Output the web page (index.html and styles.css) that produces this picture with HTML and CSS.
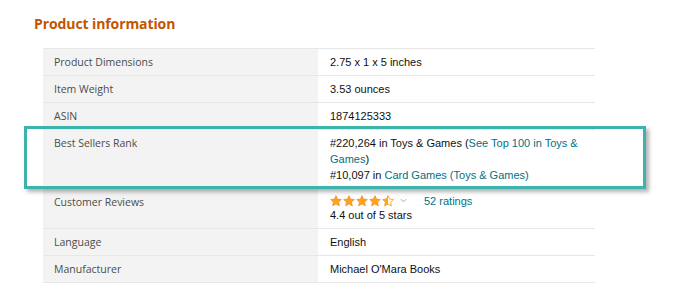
FILE: index.html
```html
<!DOCTYPE html>
<html>
<head>
<meta charset="utf-8">
<link rel="stylesheet" href="styles.css">
</head>
<body>
<div class="page">
  <h2 class="title">Product information</h2>
  <div class="table-wrap">
    <table class="info">
      <tr><th>Product Dimensions</th><td>2.75 x 1 x 5 inches</td></tr>
      <tr><th>Item Weight</th><td>3.53 ounces</td></tr>
      <tr><th>ASIN</th><td>1874125333</td></tr>
      <tr class="rank"><th>Best Sellers Rank</th><td>#220,264 in Toys &amp; Games (<a href="#">See Top 100 in Toys &amp; Games</a>)<br>#10,097 in <a href="#">Card Games (Toys &amp; Games)</a></td></tr>
      <tr class="reviews"><th>Customer Reviews</th><td>
        <div class="stars-line">
          <span class="stars">
            <svg viewBox="0 0 12 12" class="star"><path d="M6 0.6 7.6 4.1 11.4 4.5 8.6 7.1 9.4 10.9 6 9 2.6 10.9 3.4 7.1 0.6 4.5 4.4 4.1Z" fill="#ffa41c" stroke="#e47911" stroke-width="0.5"/></svg>
            <svg viewBox="0 0 12 12" class="star"><path d="M6 0.6 7.6 4.1 11.4 4.5 8.6 7.1 9.4 10.9 6 9 2.6 10.9 3.4 7.1 0.6 4.5 4.4 4.1Z" fill="#ffa41c" stroke="#e47911" stroke-width="0.5"/></svg>
            <svg viewBox="0 0 12 12" class="star"><path d="M6 0.6 7.6 4.1 11.4 4.5 8.6 7.1 9.4 10.9 6 9 2.6 10.9 3.4 7.1 0.6 4.5 4.4 4.1Z" fill="#ffa41c" stroke="#e47911" stroke-width="0.5"/></svg>
            <svg viewBox="0 0 12 12" class="star"><path d="M6 0.6 7.6 4.1 11.4 4.5 8.6 7.1 9.4 10.9 6 9 2.6 10.9 3.4 7.1 0.6 4.5 4.4 4.1Z" fill="#ffa41c" stroke="#e47911" stroke-width="0.5"/></svg>
            <svg viewBox="0 0 12 12" class="star"><path d="M6 0.6 7.6 4.1 11.4 4.5 8.6 7.1 9.4 10.9 6 9 2.6 10.9 3.4 7.1 0.6 4.5 4.4 4.1Z" fill="none" stroke="#ffa41c" stroke-width="0.9"/><path d="M6 0.6 6 9 2.6 10.9 3.4 7.1 0.6 4.5 4.4 4.1Z" fill="#ffa41c"/></svg>
          </span>
          <svg class="chev" viewBox="0 0 8 5"><path d="M1 1 4 4 7 1" fill="none" stroke="#999" stroke-width="1"/></svg>
          <a href="#" class="ratings">52 ratings</a>
        </div>
        <div class="stars-text">4.4 out of 5 stars</div>
      </td></tr>
      <tr><th>Language</th><td>English</td></tr>
      <tr><th>Manufacturer</th><td>Michael O'Mara Books</td></tr>
    </table>
    <div class="highlight"></div>
  </div>
</div>
</body>
</html>
```

FILE: styles.css
```css
html, body { margin: 0; padding: 0; background: #fff; }
.page { padding: 15px 0 0 34px; }
.title {
  margin: 0;
  font-family: "Open Sans", "Noto Sans", sans-serif;
  font-weight: 700;
  font-size: 14px;
  line-height: 18px;
  color: #c45500;
  letter-spacing: -0.1px;
}
.table-wrap { position: relative; margin: 15px 0 0 9px; width: 552px; }
.info {
  border-collapse: collapse;
  width: 552px;
  border-top: 1px solid #e7e7e7;
}
.info th, .info td {
  border-bottom: 1px solid #e7e7e7;
  padding: 5px 11px 5px 11px;
  vertical-align: top;
  text-align: left;
  line-height: 16px;
}
.info th {
  width: 253px;
  background: #f3f3f3;
  font-family: "Open Sans", "Noto Sans", sans-serif;
  font-weight: 400;
  font-size: 10.5px;
  color: #4a4d4d;
}
.info td {
  font-family: "Liberation Sans", Arial, sans-serif;
  font-size: 11px;
  color: #0f1111;
  padding-left: 12px;
}
.info .reviews td { padding-top: 4px; }
.info a { color: #007185; text-decoration: none; }
.stars-line { display: flex; align-items: center; height: 15px; }
.stars-text { line-height: 15px; }
.stars { display: flex; gap: 1px; }
.star { width: 12px; height: 12px; display: block; }
.chev { width: 7px; height: 5px; margin-left: 6px; }
.ratings { margin-left: 17px; }
.highlight {
  position: absolute;
  left: -19px;
  top: 78px;
  width: 616px;
  height: 57px;
  border: 3px solid #3cb3ab;
  box-shadow: 3px 3px 4px rgba(0,0,0,0.3);
  pointer-events: none;
}
```
